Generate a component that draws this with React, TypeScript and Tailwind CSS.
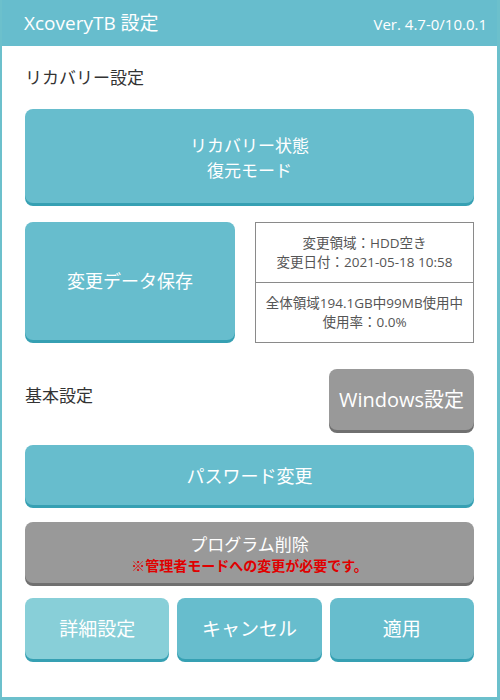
const font = { fontFamily: '"Open Sans", "Noto Sans CJK JP", sans-serif' };

function Btn({
  children,
  className = '',
  tone = 'teal',
}: {
  children: React.ReactNode;
  className?: string;
  tone?: 'teal' | 'light' | 'gray';
}) {
  const tones = {
    teal: 'bg-[#67bdcd] shadow-[0_3px_0_#36a0b3]',
    light: 'bg-[#88cfd8] shadow-[0_3px_0_#36a0b3]',
    gray: 'bg-[#999999] shadow-[0_3px_0_#707070]',
  };
  return (
    <div
      className={`flex flex-col items-center justify-center rounded-[8px] text-white ${tones[tone]} ${className}`}
    >
      {children}
    </div>
  );
}

export default function App() {
  return (
    <div
      className="w-[500px] h-[700px] bg-white border-l-2 border-r-[3px] border-b-[3px] border-[#6cc0cc] flex flex-col"
      style={font}
    >
      <div className="h-[46px] bg-[#67bdcd] flex items-center justify-between pl-[22px] pr-[10px] text-white">
        <span className="text-[19px] mt-[1px]">XcoveryTB 設定</span>
        <span className="text-[15px] mt-[3px]">Ver. 4.7-0/10.0.1</span>
      </div>

      <div className="flex flex-col px-[23px]">
        <div className="text-[17px] text-[#333] mt-[20px] leading-[24px]">リカバリー設定</div>

        <Btn className="mt-[19px] h-[94px] text-[17px] leading-[25px]">
          <span className="mt-[3px]">リカバリー状態</span>
          <span>復元モード</span>
        </Btn>

        <div className="flex gap-[20px] mt-[19px]">
          <Btn className="w-[210px] h-[118px] text-[18px]">変更データ保存</Btn>
          <div className="flex-1 h-[121px] border border-[#8a8a8a] flex flex-col text-[13.5px] text-[#555] leading-[19px] text-center">
            <div className="h-[60px] flex flex-col items-center justify-center border-b border-[#8a8a8a] pt-[1px]">
              <p>変更領域：HDD空き</p>
              <p>変更日付：2021-05-18 10:58</p>
            </div>
            <div className="flex-1 flex flex-col items-center justify-center">
              <p>全体領域194.1GB中99MB使用中</p>
              <p>使用率：0.0%</p>
            </div>
          </div>
        </div>

        <div className="flex justify-between items-start mt-[26px]">
          <span className="text-[17px] text-[#333] mt-[14px]">基本設定</span>
          <Btn tone="gray" className="w-[145px] h-[61px] text-[20px]">
            Windows設定
          </Btn>
        </div>

        <Btn className="mt-[15px] h-[60px] text-[18px] pt-[3px]">パスワード変更</Btn>

        <Btn tone="gray" className="mt-[17px] h-[61px]">
          <span className="text-[17px] leading-[22px] mt-[5px]">プログラム削除</span>
          <span className="text-[14px] leading-[20px] font-bold text-[#e00000]">
            ※管理者モードへの変更が必要です。
          </span>
        </Btn>

        <div className="grid grid-cols-3 gap-[8px] mt-[15px]">
          <Btn tone="light" className="h-[61px] text-[19px] pt-[2px]">詳細設定</Btn>
          <Btn className="h-[61px] text-[19px] pt-[2px]">キャンセル</Btn>
          <Btn className="h-[61px] text-[19px] pt-[2px]">適用</Btn>
        </div>
      </div>
    </div>
  );
}
